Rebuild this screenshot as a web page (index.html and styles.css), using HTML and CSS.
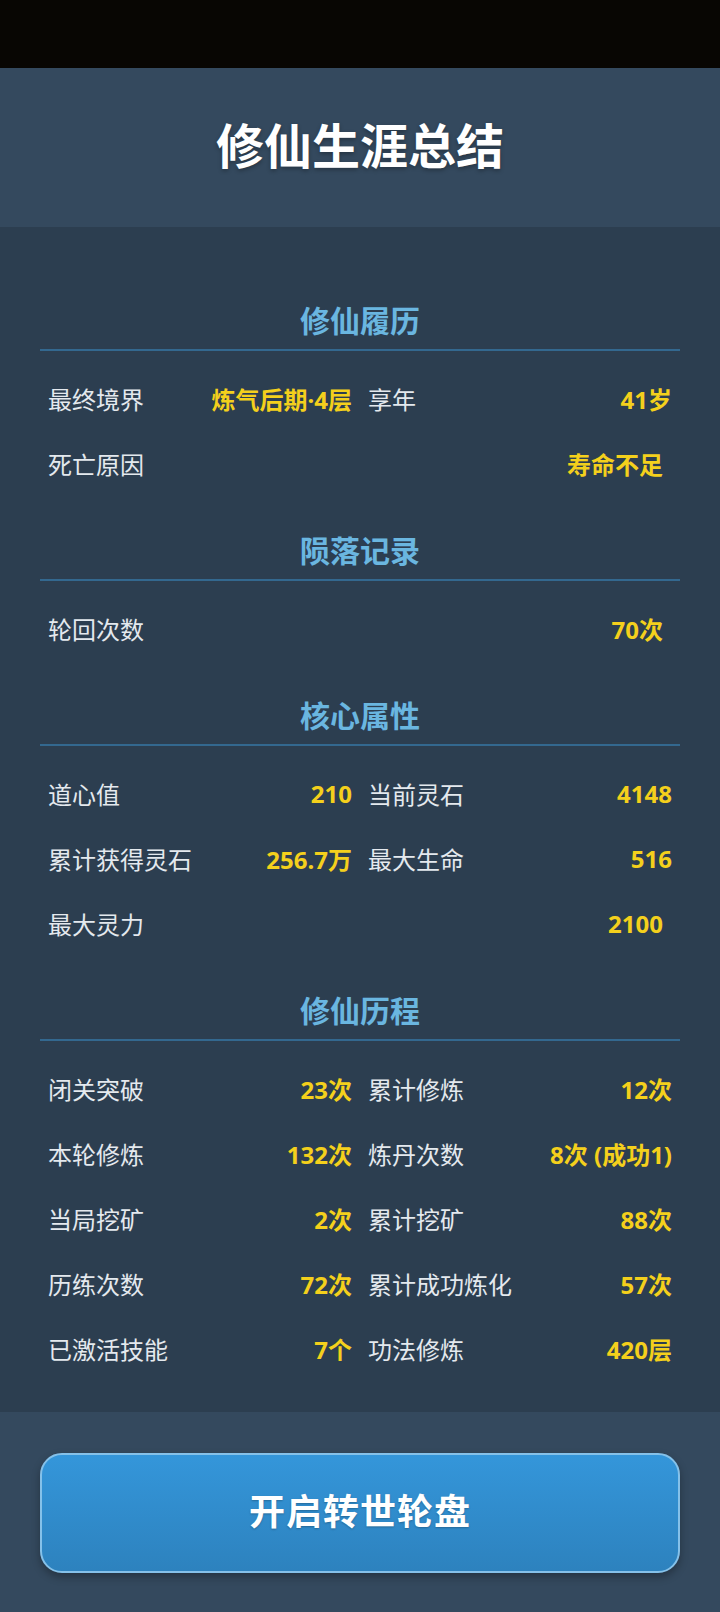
FILE: index.html
```html
<!DOCTYPE html>
<html lang="zh-CN">
<head>
  <meta charset="UTF-8" />
  <meta name="viewport" content="width=device-width, initial-scale=1.0"/>
  <title>修仙生涯总结</title>
  <link rel="stylesheet" href="styles.css">
</head>
<body>

  <div class="status-bar"></div>

  <!-- Header -->
  <div class="header">
    <h1>修仙生涯总结</h1>
  </div>

  <!-- Summary -->
  <div class="content" role="main">

    <div class="section">
      <h2>修仙履历</h2>
      <div class="grid">
        <div class="row"><span class="label">最终境界</span><span class="value">炼气后期·4层</span></div>
        <div class="row"><span class="label">享年</span><span class="value">41岁</span></div>
        <div class="row full"><span class="label">死亡原因</span><span class="value">寿命不足</span></div>
      </div>
    </div>

    <div class="section">
      <h2>陨落记录</h2>
      <div class="grid">
        <div class="row full"><span class="label">轮回次数</span><span class="value">70次</span></div>
      </div>
    </div>

    <div class="section">
      <h2>核心属性</h2>
      <div class="grid">
        <div class="row"><span class="label">道心值</span><span class="value">210</span></div>
        <div class="row"><span class="label">当前灵石</span><span class="value">4148</span></div>
        <div class="row"><span class="label">累计获得灵石</span><span class="value">256.7万</span></div>
        <div class="row"><span class="label">最大生命</span><span class="value">516</span></div>
        <div class="row full"><span class="label">最大灵力</span><span class="value">2100</span></div>
      </div>
    </div>

    <div class="section">
      <h2>修仙历程</h2>
      <div class="grid">
        <div class="row"><span class="label">闭关突破</span><span class="value">23次</span></div>
        <div class="row"><span class="label">累计修炼</span><span class="value">12次</span></div>
        <div class="row"><span class="label">本轮修炼</span><span class="value">132次</span></div>
        <div class="row"><span class="label">炼丹次数</span><span class="value">8次 (成功1)</span></div>
        <div class="row"><span class="label">当局挖矿</span><span class="value">2次</span></div>
        <div class="row"><span class="label">累计挖矿</span><span class="value">88次</span></div>
        <div class="row"><span class="label">历练次数</span><span class="value">72次</span></div>
        <div class="row"><span class="label">累计成功炼化</span><span class="value">57次</span></div>
        <div class="row"><span class="label">已激活技能</span><span class="value">7个</span></div>
        <div class="row"><span class="label">功法修炼</span><span class="value">420层</span></div>
      </div>
    </div>

  </div>

  <!-- Footer -->
  <div class="footer">
    <button class="rebirth-btn">开启转世轮盘</button>
  </div>

</body>
</html>
```

FILE: styles.css
```css
:root {
  --bar: #080603;
  --header-bg: #34495e;
  --content-bg: #2c3e50;
  --heading: #6ab6e0;
  --divider: #33688f;
  --label: #e4e9ee;
  --value: #f4d01c;
  --white: #fff;
}

* {
  box-sizing: border-box;
}

body {
  margin: 0;
  width: 720px;
  font-family: "Noto Sans CJK SC", "Noto Sans", sans-serif;
  background: var(--header-bg);
  color: var(--label);
}

.status-bar {
  height: 68px;
  background: var(--bar);
}

.header {
  height: 159px;
  background: var(--header-bg);
  display: flex;
  align-items: center;
  justify-content: center;
}

.header h1 {
  margin: 0;
  font-size: 48px;
  font-weight: 700;
  color: var(--white);
  line-height: 1;
  padding-bottom: 10px;
  text-shadow: 0 2px 4px rgba(0, 0, 0, 0.3);
}

.content {
  background: var(--content-bg);
  padding: 39px 40px 31px;
}

.section {
  margin-top: 35px;
}

.section h2 {
  margin: 0;
  text-align: center;
  font-size: 30px;
  font-weight: 700;
  line-height: 36px;
  color: var(--heading);
  padding-bottom: 12px;
  border-bottom: 2px solid var(--divider);
}

.grid {
  display: grid;
  grid-template-columns: 1fr 1fr;
  margin-top: 15px;
}

.row {
  display: flex;
  justify-content: space-between;
  align-items: center;
  height: 65px;
  padding: 0 8px;
  font-size: 24px;
}

.row.full {
  grid-column: 1 / -1;
  padding-right: 17px;
}

.label {
  color: var(--label);
}

.value {
  font-family: "Noto Sans", "Noto Sans CJK SC", sans-serif;
  color: var(--value);
  font-weight: 700;
}

.footer {
  background: var(--header-bg);
  padding: 41px 40px 40px;
}

.rebirth-btn {
  display: block;
  width: 100%;
  height: 120px;
  padding: 0 0 9px;
  border: 2px solid #85c1e9;
  border-radius: 22px;
  background: linear-gradient(to bottom, #3496da, #2d82be);
  color: var(--white);
  font-family: inherit;
  font-size: 36px;
  font-weight: 700;
  letter-spacing: 1px;
  box-shadow: 0 4px 8px rgba(0, 0, 0, 0.3);
  text-shadow: 0 1px 2px rgba(0, 0, 0, 0.25);
  cursor: pointer;
}
```
